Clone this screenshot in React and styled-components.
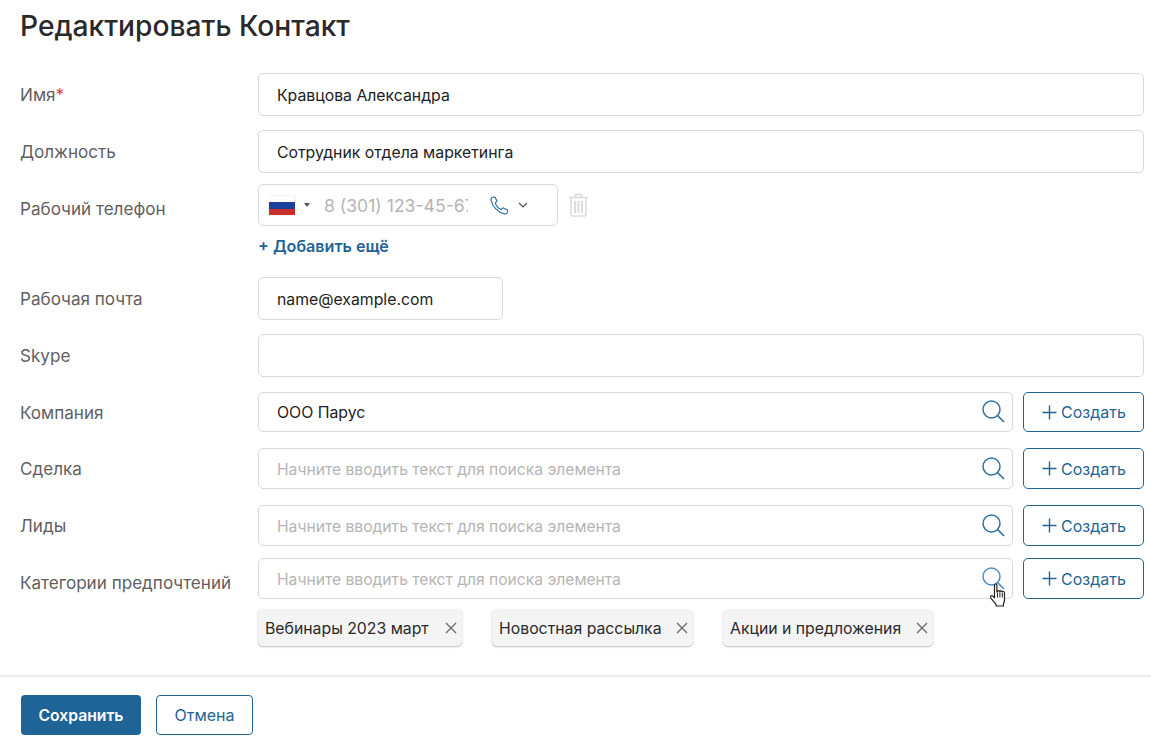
import React from "react";
import styled, { createGlobalStyle } from "styled-components";

const Global = createGlobalStyle`
  html, body { margin: 0; padding: 0; background: #fff; }
  body { font-family: Inter, "Noto Sans", sans-serif; color: #222; }
  * { box-sizing: border-box; }
`;

const Page = styled.div`
  width: 1151px;
  height: 746px;
  overflow: hidden;
  display: flex;
  flex-direction: column;
`;
const Title = styled.h1`
  margin: 0;
  padding: 9px 0 0 20px;
  height: 73px;
  font-size: 28.2px;
  line-height: 34px;
  font-weight: 500;
  color: #2a2a2a;
`;
const Form = styled.div`
  padding: 0 7px 0 20px;
  display: flex;
  flex-direction: column;
`;
const Row = styled.div`
  display: grid;
  grid-template-columns: 238px 1fr;
  margin-top: ${(p) => p.$top || 0}px;
`;
const Label = styled.div`
  font-size: 17.1px;
  line-height: 20px;
  color: #5f5f5f;
  padding-top: ${(p) => p.$pt ?? 11}px;
`;
const Req = styled.span`
  color: #e03a3a;
`;
const Field = styled.div`
  height: ${(p) => p.$h || 43}px;
  width: ${(p) => (p.$w ? `${p.$w}px` : "100%")};
  border: 1px solid #d9d9d9;
  border-radius: 5px;
  padding: 1px 18px 0;
  display: flex;
  align-items: center;
  font-size: 15.8px;
  color: #222;
  background: #fff;
  position: relative;
`;
const LookupRow = styled.div`
  display: flex;
  gap: 10px;
`;
const Lookup = styled(Field)`
  flex: 1;
  width: auto;
  justify-content: space-between;
  padding: 0 6px 0 18px;
`;
const Placeholder = styled.span`
  font-size: 15.65px;
  color: #b5b5b5;
  padding-top: 1px;
`;
const CreateBtn = styled.button`
  width: 121px;
  height: ${(p) => p.$h || 41}px;
  border: 1px solid #1f6496;
  border-radius: 5px;
  background: #fff;
  color: #1f6496;
  font: 400 16px Inter, sans-serif;
  display: flex;
  align-items: center;
  justify-content: center;
  gap: 4px;
  padding: 0 0 0 1px;
`;
const PhoneWrap = styled.div`
  display: flex;
  align-items: center;
  gap: 10px;
`;
const PhoneBox = styled.div`
  width: 300px;
  height: 42px;
  border: 1px solid #d9d9d9;
  border-radius: 5px;
  display: flex;
  align-items: center;
  padding-left: 10px;
`;
const Flag = styled.div`
  width: 26px;
  height: 19px;
  background: linear-gradient(#fdfdfd 0 33%, #1a3f9c 33% 66%, #c8302a 66%);
  box-shadow: 0 0 1px #bbb;
`;
const Caret = styled.div`
  margin-left: 9px;
  width: 0;
  height: 0;
  border-left: 3px solid transparent;
  border-right: 3px solid transparent;
  border-top: 4px solid #555;
`;
const PhoneText = styled.div`
  width: 144px;
  margin-left: 14px;
  overflow: hidden;
  white-space: nowrap;
  font-size: 17.6px;
  color: #b5b5b5;
`;
const PhoneIcons = styled.div`
  display: flex;
  align-items: center;
  gap: 9px;
  margin-left: 22px;
`;
const AddMore = styled.div`
  margin-top: 10px;
  height: 20px;
  font-size: 16.1px;
  line-height: 20px;
  font-weight: 600;
  color: #1f6496;
`;
const Chips = styled.div`
  display: flex;
  gap: 30px;
  margin: 10px 0 0 238px;
`;
const Chip = styled.div`
  height: 37px;
  width: ${(p) => p.$w}px;
  background: #f4f4f4;
  border-radius: 5px;
  box-shadow: 0 1px 2px rgba(0, 0, 0, 0.28);
  display: flex;
  align-items: center;
  justify-content: space-between;
  padding: 1px 5px 0 7px;
  font-size: 15.8px;
  color: #2a2a2a;
  white-space: nowrap;
`;
const Footer = styled.div`
  margin-top: 29px;
  border-top: 2px solid #ececec;
  padding: 18px 0 0 21px;
  display: flex;
  gap: 15px;
`;
const SaveBtn = styled.button`
  width: 120px;
  height: 40px;
  border: none;
  border-radius: 4px;
  background: #1f6496;
  color: #fff;
  font: 600 15.7px Inter, sans-serif;
  padding: 0;
`;
const CancelBtn = styled.button`
  width: 97px;
  height: 40px;
  border: 1px solid #1f6496;
  border-radius: 4px;
  background: #fff;
  color: #1f6496;
  font: 400 16px Inter, sans-serif;
  padding: 0;
`;
const Cursor = styled.svg`
  position: absolute;
  right: 5px;
  top: 24px;
`;

const Search = ({ color = "#2f72a3" }) => (
  <svg width="26" height="26" viewBox="0 0 26 26" fill="none" stroke={color} strokeWidth="1.5">
    <circle cx="11.5" cy="10.5" r="8.5" />
    <path d="M17.5 16.5 L24 23" strokeWidth="1.7" />
  </svg>
);
const Plus = () => (
  <svg width="15" height="15" viewBox="0 0 15 15" stroke="#1f6496" strokeWidth="1.4">
    <path d="M7.5 0.5v14M0.5 7.5h14" />
  </svg>
);
const Close = () => (
  <svg width="12" height="12" viewBox="0 0 12 12" stroke="#6f6f6f" strokeWidth="1.4">
    <path d="M1 1l10 10M11 1L1 11" />
  </svg>
);
const Phone = () => (
  <svg width="19" height="19" viewBox="0 0 19 19" fill="none" stroke="#2f72a3" strokeWidth="1.2" strokeLinejoin="round">
    <path d="M2 1.5 L5 1 L7 5.2 L5.3 6.9 C6 9.6 8.6 12.6 11.4 13.5 L13 11.8 L17.5 14 L17.3 16.6 C17 17.6 15.6 18 14.4 17.8 C8 16.6 2.3 10.6 1 4 C0.9 3 1.2 2 2 1.5 Z" />
  </svg>
);
const Chevron = () => (
  <svg width="10" height="6" viewBox="0 0 10 6" fill="none" stroke="#555" strokeWidth="1.2">
    <path d="M1 1l4 4 4-4" />
  </svg>
);
const Trash = () => (
  <svg width="21" height="24" viewBox="0 0 20 24" fill="none" stroke="#dcdcdc" strokeWidth="1.6">
    <path d="M0.5 4.5h19M7 4V1.5h6V4" />
    <path d="M2.5 5v16.5a1.5 1.5 0 0 0 1.5 1.5h12a1.5 1.5 0 0 0 1.5-1.5V5" />
    <path d="M6.5 8v12M10 8v12M13.5 8v12" strokeWidth="2" />
  </svg>
);
const Hand = () => (
  <Cursor width="18" height="24" viewBox="0 0 17 24">
    <path
      d="M5 2.2c0-1.6 2.4-1.6 2.4 0V9l0.6-.2c.1-1.5 2.2-1.5 2.4 0 .2-1.2 2.2-1.2 2.4.2.4-.9 2.2-.7 2.2.9v6.6c0 2.2-.6 3.2-1.1 4.4V23H6.6v-1.6C5 19.6 3.2 17.4 1.2 14.8c-1-1.5.9-2.9 2.2-1.6L5 14.8Z"
      fill="#fff"
      stroke="#222"
      strokeWidth="1.2"
      strokeLinejoin="round"
    />
    <path d="M8 9.5v5M10.4 9.5v5M12.8 10v4.5" stroke="#222" strokeWidth="1" />
  </Cursor>
);

const lookups = [
  { label: "Компания", value: "ООО Парус", h: 40, top: 15, pt: 11 },
  { label: "Сделка", h: 41, top: 16, pt: 11 },
  { label: "Лиды", h: 41, top: 16, pt: 11 },
  { label: "Категории предпочтений", h: 41, top: 12, pt: 15, hand: true },
];

export default function App() {
  return (
    <Page>
      <Global />
      <Title>Редактировать Контакт</Title>
      <Form>
        <Row>
          <Label $pt={12}>
            Имя<Req>*</Req>
          </Label>
          <Field>Кравцова Александра</Field>
        </Row>
        <Row $top={14}>
          <Label $pt={12}>Должность</Label>
          <Field>Сотрудник отдела маркетинга</Field>
        </Row>
        <Row $top={11}>
          <Label $pt={15}>Рабочий телефон</Label>
          <div>
            <PhoneWrap>
              <PhoneBox>
                <Flag />
                <Caret />
                <PhoneText>8 (301) 123-45-67</PhoneText>
                <PhoneIcons>
                  <Phone />
                  <Chevron />
                </PhoneIcons>
              </PhoneBox>
              <Trash />
            </PhoneWrap>
            <AddMore>+ Добавить ещё</AddMore>
          </div>
        </Row>
        <Row $top={21}>
          <Label $pt={12}>Рабочая почта</Label>
          <Field $w={245}>name@example.com</Field>
        </Row>
        <Row $top={14}>
          <Label $pt={12}>Skype</Label>
          <Field />
        </Row>
        {lookups.map((l) => (
          <Row key={l.label} $top={l.top}>
            <Label $pt={l.pt}>{l.label}</Label>
            <LookupRow>
              <Lookup $h={l.h}>
                {l.value ? <span>{l.value}</span> : <Placeholder>Начните вводить текст для поиска элемента</Placeholder>}
                <Search color={l.hand ? "#4a90c0" : undefined} />
                {l.hand && <Hand />}
              </Lookup>
              <CreateBtn $h={l.h}>
                <Plus />
                Создать
              </CreateBtn>
            </LookupRow>
          </Row>
        ))}
        <Chips>
          <Chip $w={204}>
            Вебинары 2023 март
            <Close />
          </Chip>
          <Chip $w={201}>
            Новостная рассылка
            <Close />
          </Chip>
          <Chip $w={210}>
            Акции и предложения
            <Close />
          </Chip>
        </Chips>
      </Form>
      <Footer>
        <SaveBtn>Сохранить</SaveBtn>
        <CancelBtn>Отмена</CancelBtn>
      </Footer>
    </Page>
  );
}
